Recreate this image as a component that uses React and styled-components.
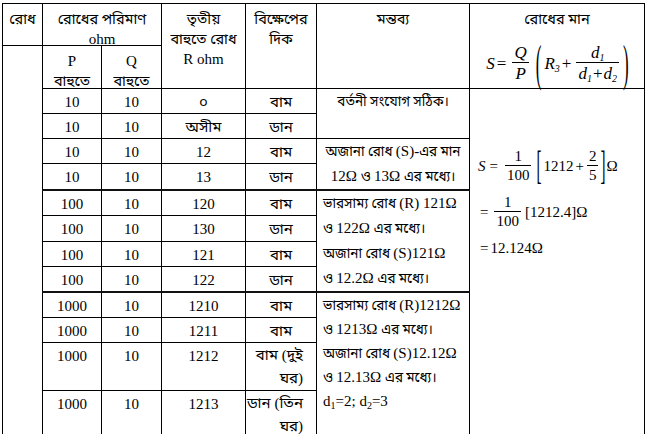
import React from "react";
import styled, { createGlobalStyle } from "styled-components";

const GlobalStyle = createGlobalStyle`
  body {
    margin: 0;
    background: #fff;
  }
`;

const Page = styled.div`
  padding: 3px 0 0 2px;
  font-family: "Liberation Serif", "Noto Sans Bengali", "Lohit Bengali", "Noto Serif Bengali", serif;
  color: #000;
`;

const Table = styled.table`
  border-collapse: collapse;
  table-layout: fixed;
  width: 642px;
`;

const Row = styled.tr`
  height: ${props => props.$h || 25}px;
`;

const Head = styled.th`
  border: 1px solid #000;
  font-weight: normal;
  font-size: 15px;
  padding: 0;
  vertical-align: top;
  text-align: center;
`;

// fixed-height box so the header rows keep the reference height
const HeadBox = styled.div`
  box-sizing: border-box;
  height: ${props => props.$h}px;
  padding-top: 5px;
`;

const HLine = styled.div`
  height: 20px;
  line-height: 20px;
  white-space: nowrap;
`;

const Cell = styled.td`
  border: 1px solid #000;
  border-top: ${props => (props.$thick ? "2px solid #111" : "1px solid #000")};
  font-size: 15px;
  line-height: 22px;
  padding: ${props => props.$pad || "2px 0 0"};
  vertical-align: top;
  text-align: ${props => props.$align || "center"};
  white-space: nowrap;
`;

const Line = styled.div`
  height: ${props => props.$h || 25}px;
  line-height: ${props => props.$h || 25}px;
  white-space: nowrap;
`;

const Bn = styled.span`
  font-size: ${props => props.$size || 15}px;
`;

const FormulaHead = styled.div`
  display: flex;
  justify-content: center;
  align-items: center;
  height: 40px;
  margin-top: 14px;
  padding-left: 2px;
  font-size: 17px;
  font-style: italic;
  line-height: 1;
`;

const Formula = styled.div`
  display: flex;
  align-items: center;
  font-size: 15px;
  line-height: 1;
  height: ${props => props.$h || 30}px;
  margin-top: ${props => props.$mt || 0}px;
`;

const Frac = styled.span`
  display: inline-flex;
  flex-direction: column;
  align-items: center;
  margin: 0 ${props => props.$m || 3}px;
`;

const Num = styled.span`
  padding: 0 2px 1px;
  border-bottom: 1px solid #000;
  align-self: stretch;
  text-align: center;
`;

const Den = styled.span`
  padding: 2px 2px 0;
`;

const Big = styled.span`
  display: inline-block;
  font-style: normal;
  transform: scaleY(${props => props.$s || 2});
  margin: 0 ${props => props.$m || 1}px;
`;

const Sub = styled.sub`
  font-size: 10px;
  vertical-align: -3px;
  line-height: 0;
`;

const Op = styled.span`
  font-style: normal;
  margin: 0 ${props => props.$m || 2}px;
`;

const Term = styled.span`
  white-space: nowrap;
`;

const It = styled.i``;

// wrap Bengali runs so they can be sized apart from the Latin text
const bn = (text, size) =>
  text.split(/([\u0980-\u09FF\u0964][\u0980-\u09FF\u0964 ]*)/).map((part, i) =>
    i % 2 ? (
      <Bn key={i} $size={size}>
        {part}
      </Bn>
    ) : (
      part
    )
  );

const data = [
  { p: "10", q: "10", r: "০", dir: "বাম" },
  { p: "10", q: "10", r: "অসীম", dir: "ডান" },
  { p: "10", q: "10", r: "12", dir: "বাম" },
  { p: "10", q: "10", r: "13", dir: "ডান", h: 26 },
  { p: "100", q: "10", r: "120", dir: "বাম", thick: true, h: 24 },
  { p: "100", q: "10", r: "130", dir: "ডান", h: 26 },
  { p: "100", q: "10", r: "121", dir: "বাম" },
  { p: "100", q: "10", r: "122", dir: "ডান" },
  { p: "1000", q: "10", r: "1210", dir: "বাম", thick: true },
  { p: "1000", q: "10", r: "1211", dir: "বাম", h: 24 },
  { p: "1000", q: "10", r: "1212", dir: ["বাম (দুই", "ঘর)"], h: 47 },
  { p: "1000", q: "10", r: "1213", dir: ["ডান (তিন", "ঘর)"], h: 47 },
];

const comments = {
  0: { span: 2, align: "center", lh: 25, lines: ["বর্তনী সংযোগ সঠিক।"] },
  2: { span: 2, align: "center", lh: 25, lines: ["অজানা রোধ (S)-এর মান", "12Ω ও 13Ω এর মধ্যে।"] },
  4: {
    span: 4,
    align: "left",
    lh: 25,
    lines: ["ভারসাম্য রোধ (R) 121Ω", "ও 122Ω এর মধ্যে।", "অজানা রোধ (S)121Ω", "ও 12.2Ω এর মধ্যে।"],
  },
  8: {
    span: 4,
    align: "left",
    lh: 24,
    lines: ["ভারসাম্য রোধ (R)1212Ω", "ও 1213Ω এর মধ্যে।", "অজানা রোধ (S)12.12Ω", "ও 12.13Ω এর মধ্যে।", "d"],
  },
};

const Comment = ({ text, h }) => {
  if (text === "d") {
    return (
      <Line $h={h}>
        d<Sub>1</Sub>=2; d<Sub>2</Sub>=3
      </Line>
    );
  }
  return <Line $h={h}>{bn(text, 13.5)}</Line>;
};

const Result = () => (
  <>
    <Formula $h={44}>
      <It>S</It>
      <Op $m={4}>=</Op>
      <Frac>
        <Num>1</Num>
        <Den>100</Den>
      </Frac>
      <Big $s={2.7} $m={2}>[</Big>
      1212
      <Op>+</Op>
      <Frac $m={1}>
        <Num>2</Num>
        <Den>5</Den>
      </Frac>
      <Big $s={2.7} $m={1}>]</Big>
      Ω
    </Formula>
    <Formula $mt={9}>
      <Op $m={2}>=</Op>
      <Frac $m={4}>
        <Num>1</Num>
        <Den>100</Den>
      </Frac>
      [1212.4]Ω
    </Formula>
    <Formula $mt={11} $h={20}>
      <Op $m={2}>=</Op> 12.124Ω
    </Formula>
  </>
);

export default function App() {
  return (
    <Page>
      <GlobalStyle />
      <Table>
        <colgroup>
          <col style={{ width: 40 }} />
          <col style={{ width: 59 }} />
          <col style={{ width: 60 }} />
          <col style={{ width: 84 }} />
          <col style={{ width: 71 }} />
          <col style={{ width: 153 }} />
          <col style={{ width: 175 }} />
        </colgroup>
        <tbody>
          <Row $h={42}>
            <Head>
              <HeadBox $h={40}>
                <HLine>{bn("রোধ", 14.5)}</HLine>
              </HeadBox>
            </Head>
            <Head colSpan={2}>
              <HeadBox $h={40}>
                <HLine>{bn("রোধের পরিমাণ", 14.5)}</HLine>
                <HLine>ohm</HLine>
              </HeadBox>
            </Head>
            <Head rowSpan={2}>
              <HeadBox $h={82}>
                <HLine>{bn("তৃতীয়", 14.5)}</HLine>
                <HLine>{bn("বাহুতে রোধ", 14.5)}</HLine>
                <HLine>R ohm</HLine>
              </HeadBox>
            </Head>
            <Head rowSpan={2}>
              <HeadBox $h={82}>
                <HLine>{bn("বিক্ষেপের", 14.5)}</HLine>
                <HLine>{bn("দিক", 14.5)}</HLine>
              </HeadBox>
            </Head>
            <Head rowSpan={2}>
              <HeadBox $h={82}>
                <HLine>{bn("মন্তব্য", 14.5)}</HLine>
              </HeadBox>
            </Head>
            <Head rowSpan={2}>
              <HeadBox $h={82}>
                <HLine>{bn("রোধের মান", 14.5)}</HLine>
                <FormulaHead>
                  S<Op $m={0}>=</Op>
                  <Frac $m={4}>
                    <Num>Q</Num>
                    <Den>P</Den>
                  </Frac>
                  <Big $s={3} $m={3}>(</Big>
                  <Term>
                    R<Sub>3</Sub>
                  </Term>
                  <Op>+</Op>
                  <Frac $m={0}>
                    <Num>
                      d<Sub>1</Sub>
                    </Num>
                    <Den>
                      d<Sub>1</Sub>
                      <Op $m={1}>+</Op>d<Sub>2</Sub>
                    </Den>
                  </Frac>
                  <Big $s={3} $m={1}>)</Big>
                </FormulaHead>
              </HeadBox>
            </Head>
          </Row>
          <Row $h={43}>
            <Head rowSpan={13}></Head>
            <Head>
              <HeadBox $h={41}>
                <HLine>P</HLine>
                <HLine>{bn("বাহুতে", 14.5)}</HLine>
              </HeadBox>
            </Head>
            <Head>
              <HeadBox $h={41}>
                <HLine>Q</HLine>
                <HLine>{bn("বাহুতে", 14.5)}</HLine>
              </HeadBox>
            </Head>
          </Row>
          {data.map((row, i) => {
            const c = comments[i];
            return (
              <Row key={i} $h={row.h}>
                <Cell $thick={row.thick}>{row.p}</Cell>
                <Cell $thick={row.thick}>{row.q}</Cell>
                <Cell $thick={row.thick}>{row.r}</Cell>
                {Array.isArray(row.dir) ? (
                  <Cell $thick={row.thick} $align="right" $pad="1px 13px 0 0">
                    <Line $h={23}>{row.dir[0]}</Line>
                    <Line $h={23}>{row.dir[1]}</Line>
                  </Cell>
                ) : (
                  <Cell $thick={row.thick}>{row.dir}</Cell>
                )}
                {c && (
                  <Cell
                    rowSpan={c.span}
                    $thick={row.thick}
                    $align={c.align}
                    $pad={c.align === "left" ? "0 0 0 6px" : "0"}
                  >
                    {c.lines.map((l, k) => (
                      <Comment key={k} text={l} h={c.lh} />
                    ))}
                  </Cell>
                )}
                {i === 0 && (
                  <Cell rowSpan={12} $align="left" $pad="55px 0 0 8px">
                    <Result />
                  </Cell>
                )}
              </Row>
            );
          })}
        </tbody>
      </Table>
    </Page>
  );
}
